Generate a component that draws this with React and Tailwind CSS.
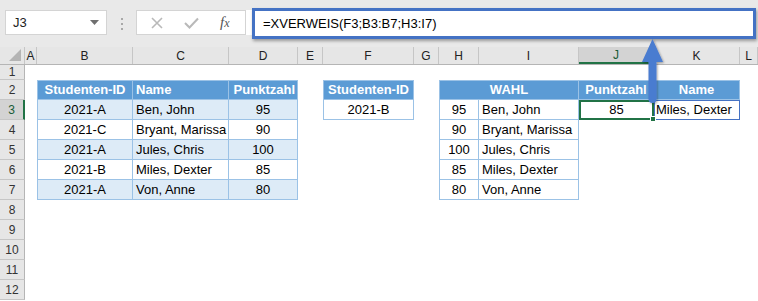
import React from 'react';

// column layout of the visible sheet (widths in px)
const COLS = [
  { key: 'A', w: 'w-[12px]' },
  { key: 'B', w: 'w-[96px]' },
  { key: 'C', w: 'w-[96px]' },
  { key: 'D', w: 'w-[69px]' },
  { key: 'E', w: 'w-[25px]' },
  { key: 'F', w: 'w-[91px]' },
  { key: 'G', w: 'w-[25px]' },
  { key: 'H', w: 'w-[40px]' },
  { key: 'I', w: 'w-[100px]' },
  { key: 'J', w: 'w-[75px]' },
  { key: 'K', w: 'w-[86px]' },
  { key: 'L', w: 'w-[18px]' },
];

const HDR = 'bg-[#5b9bd5] text-white font-bold border-r border-b border-[#9bc2e6]';
const BLUE = 'bg-[#ddebf7] border-r border-b border-[#9bc2e6]';
const PLAIN = 'bg-white border-r border-b border-[#9bc2e6]';

const students = [
  ['2021-A', 'Ben, John', '95'],
  ['2021-C', 'Bryant, Marissa', '90'],
  ['2021-A', 'Jules, Chris', '100'],
  ['2021-B', 'Miles, Dexter', '85'],
  ['2021-A', 'Von, Anne', '80'],
];

// build the cell map: "B3" -> { text, cls, span }
const CELLS = {
  B2: { text: 'Studenten-ID', cls: `${HDR} border-l border-t justify-center` },
  C2: { text: 'Name', cls: `${HDR} border-t justify-start pl-[3px]` },
  D2: { text: 'Punktzahl', cls: `${HDR} border-t justify-end pr-[2px]` },
  F2: { text: 'Studenten-ID', cls: `${HDR} border-l border-t justify-center` },
  F3: { text: '2021-B', cls: `${PLAIN} border-l justify-center` },
  H2: { text: 'WAHL', cls: `${HDR} border-l border-t justify-center`, w: 'w-[140px]', skip: 'I' },
  J2: { text: 'Punktzahl', cls: `${HDR} border-t justify-center` },
  K2: { text: 'Name', cls: `${HDR} border-t justify-center` },
};

students.forEach(([id, name, pts], i) => {
  const r = i + 3;
  const bg = i % 2 === 0 ? BLUE : PLAIN;
  CELLS[`B${r}`] = { text: id, cls: `${bg} border-l justify-center` };
  CELLS[`C${r}`] = { text: name, cls: `${bg} justify-start pl-[3px]` };
  CELLS[`D${r}`] = { text: pts, cls: `${bg} justify-center` };
  CELLS[`H${r}`] = { text: pts, cls: `${PLAIN} border-l justify-center` };
  CELLS[`I${r}`] = { text: name, cls: `${PLAIN} justify-start pl-[3px]` };
});

const ROWS = [1, 2, 3, 4, 5, 6, 7, 8, 9, 10, 11, 12];

const FormulaBar = () => (
  <div className="h-[47px] bg-[#e9e9e9] flex items-start relative">
    {/* Name box */}
    <div className="mt-[10px] ml-[5px] w-[102px] h-[25px] bg-white border border-[#d4d4d4] flex items-center justify-between px-[7px]">
      <span className="text-[13px] text-[#222]">J3</span>
      <svg width="9" height="5" viewBox="0 0 9 5"><path d="M0 0h9L4.5 5z" fill="#6f6f6f" /></svg>
    </div>
    {/* splitter dots */}
    <div className="mt-[18px] ml-[14px] flex flex-col gap-[3px]">
      <span className="w-[2px] h-[2px] bg-[#a8a8a8]" />
      <span className="w-[2px] h-[2px] bg-[#a8a8a8]" />
      <span className="w-[2px] h-[2px] bg-[#a8a8a8]" />
    </div>
    {/* cancel / enter / fx */}
    <div className="mt-[10px] ml-[13px] w-[110px] h-[25px] bg-white border border-[#d4d4d4] flex items-center">
      <svg className="ml-[14px]" width="12" height="12" viewBox="0 0 12 12">
        <path d="M1 1l10 10M11 1L1 11" stroke="#b9b9b9" strokeWidth="1.6" />
      </svg>
      <svg className="ml-[21px]" width="15" height="12" viewBox="0 0 15 12">
        <path d="M1 6l4.5 4.5L14 1.5" stroke="#b9b9b9" strokeWidth="2" fill="none" />
      </svg>
      <span className="ml-[21px] italic text-[15px] text-[#555] font-['Liberation_Serif',serif] leading-none">
        f<span className="text-[12px]">x</span>
      </span>
    </div>
    {/* formula input, highlighted */}
    <div className="mt-[10px] w-[6px] h-[25px] bg-white" />
    <div className="mt-[8px] w-[504px] h-[31px] bg-white border-[3px] border-[#4472c4] shadow-[1px_2px_3px_rgba(0,0,0,0.35)] flex items-center pl-[8px]">
      <span className="text-[13px] text-black">=XVERWEIS(F3;B3:B7;H3:I7)</span>
    </div>
  </div>
);

const ColumnHeader = () => (
  <div className="flex h-[18px] bg-[#e6e6e6] border-b border-[#b5b5b5]">
    <div className="w-[25px] h-full relative border-r border-[#c6c6c6]">
      <svg className="absolute right-[3px] bottom-[3px]" width="12" height="12" viewBox="0 0 12 12">
        <path d="M12 0v12H0z" fill="#b4b4b4" />
      </svg>
    </div>
    {COLS.map((c) => (
      <div
        key={c.key}
        className={`${c.w} h-full flex items-center justify-center text-[12px] border-r border-[#c6c6c6] ${
          c.key === 'J' ? 'bg-[#d3d3d3] border-b-2 border-b-[#217346] text-[#185c37]' : 'text-[#222]'
        }`}
      >
        {c.key}
      </div>
    ))}
  </div>
);

const SheetRow = ({ r }) => {
  const h = r === 1 ? 'h-[15px]' : 'h-[20px]';
  const active = r === 3;
  const out = [];
  for (let i = 0; i < COLS.length; i++) {
    const c = COLS[i];
    const id = `${c.key}${r}`;
    if (id === 'J3') {
      out.push(
        <div key={id} className={`${c.w} h-full relative border-2 border-[#217346] bg-white flex items-center justify-center`}>
          85
          <span className="absolute -right-[4px] -bottom-[4px] w-[6px] h-[6px] bg-[#217346] border border-white z-10" />
        </div>
      );
      continue;
    }
    if (id === 'K3') {
      out.push(
        <div key={id} className={`${c.w} h-full border border-[#4472c4] bg-white flex items-center whitespace-nowrap overflow-visible pl-[1px]`}>
          Miles, Dexter
        </div>
      );
      continue;
    }
    const cell = CELLS[id];
    if (cell) {
      out.push(
        <div key={id} className={`${cell.w || c.w} h-full flex items-center whitespace-nowrap ${cell.cls}`}>
          {cell.text}
        </div>
      );
      if (cell.skip) i++;
      continue;
    }
    out.push(<div key={id} className={`${c.w} h-full`} />);
  }
  return (
    <div className={`flex ${h}`}>
      <div
        className={`w-[25px] h-full flex items-center justify-center text-[12px] border-b border-[#c6c6c6] ${
          active ? 'bg-[#d3d3d3] border-r-2 border-r-[#217346] text-[#185c37]' : 'bg-[#e6e6e6] border-r border-r-[#b5b5b5] text-[#333]'
        }`}
      >
        {r}
      </div>
      {out}
    </div>
  );
};

export default function App() {
  return (
    <div className="relative w-[758px] h-[301px] overflow-hidden bg-white font-['Liberation_Sans',Arial,sans-serif] text-[13px] text-black">
      <FormulaBar />
      <ColumnHeader />
      <div className="flex flex-col">
        {ROWS.map((r) => (
          <SheetRow key={r} r={r} />
        ))}
      </div>
      {/* arrow from J3 up to the formula bar */}
      <svg className="absolute left-0 top-0 pointer-events-none" width="758" height="301" viewBox="0 0 758 301">
        <defs>
          <filter id="sh" x="-50%" y="-50%" width="200%" height="200%">
            <feDropShadow dx="1" dy="1" stdDeviation="1.2" floodColor="#000" floodOpacity="0.35" />
          </filter>
        </defs>
        <g filter="url(#sh)">
          <path d="M652.5 39L663 62h-6.5v37a4 4 0 0 1-8 0V62H642z" fill="#4a7bd0" />
        </g>
      </svg>
    </div>
  );
}
